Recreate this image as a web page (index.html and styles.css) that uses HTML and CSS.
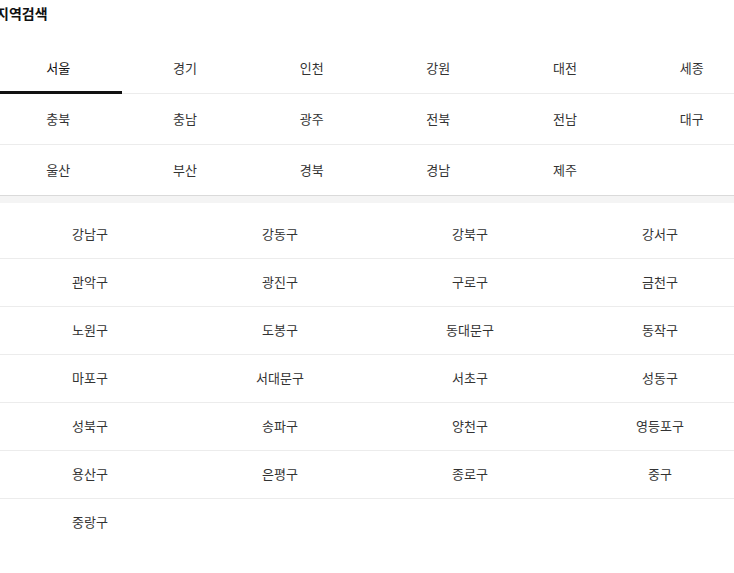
FILE: index.html
```html
<!DOCTYPE html>
<html lang="ko">
<head>
<meta charset="utf-8">
<link rel="stylesheet" href="styles.css">
</head>
<body>
<div class="page">
  <h1 class="title">지역검색</h1>
  <div class="tabs">
    <div class="tab active">서울</div>
    <div class="tab">경기</div>
    <div class="tab">인천</div>
    <div class="tab">강원</div>
    <div class="tab">대전</div>
    <div class="tab">세종</div>
    <div class="tab">충북</div>
    <div class="tab">충남</div>
    <div class="tab">광주</div>
    <div class="tab">전북</div>
    <div class="tab">전남</div>
    <div class="tab">대구</div>
    <div class="tab">울산</div>
    <div class="tab">부산</div>
    <div class="tab">경북</div>
    <div class="tab">경남</div>
    <div class="tab">제주</div>
    <div class="tab"></div>
  </div>
  <div class="band"></div>
  <div class="districts">
    <div class="gu">강남구</div>
    <div class="gu">강동구</div>
    <div class="gu">강북구</div>
    <div class="gu">강서구</div>
    <div class="gu">관악구</div>
    <div class="gu">광진구</div>
    <div class="gu">구로구</div>
    <div class="gu">금천구</div>
    <div class="gu">노원구</div>
    <div class="gu">도봉구</div>
    <div class="gu">동대문구</div>
    <div class="gu">동작구</div>
    <div class="gu">마포구</div>
    <div class="gu">서대문구</div>
    <div class="gu">서초구</div>
    <div class="gu">성동구</div>
    <div class="gu">성북구</div>
    <div class="gu">송파구</div>
    <div class="gu">양천구</div>
    <div class="gu">영등포구</div>
    <div class="gu">용산구</div>
    <div class="gu">은평구</div>
    <div class="gu">종로구</div>
    <div class="gu">중구</div>
    <div class="gu">중랑구</div>
  </div>
</div>
</body>
</html>
```
FILE: styles.css
```css
html, body {
  margin: 0;
  padding: 0;
  background: #fff;
  overflow: hidden;
}
body {
  font-family: "Noto Sans CJK KR", "Noto Sans", sans-serif;
  color: #333;
}
.page {
  width: 760px;
  margin-left: -5px;
}
.title {
  margin: 0 0 17px 0;
  font-size: 14px;
  font-weight: 700;
  line-height: 26px;
  color: #111;
  padding-left: 1px;
}
.tabs {
  display: grid;
  grid-template-columns: repeat(6, 1fr);
  border-bottom: 1px solid #dadada;
}
.tab {
  height: 50px;
  line-height: 49px;
  text-align: center;
  font-size: 13px;
  color: #333;
}
.tab:nth-child(-n+12) {
  border-bottom: 1px solid #ececec;
}
.tab.active {
  color: #111;
  border-bottom-color: #111;
  box-shadow: inset 0 -2px 0 #111;
}
.band {
  height: 7px;
  background: #f4f4f4;
}
.districts {
  display: grid;
  grid-template-columns: repeat(4, 1fr);
  padding-top: 8px;
}
.gu {
  height: 47px;
  line-height: 45px;
  text-align: center;
  font-size: 13px;
  color: #333;
}
.gu:nth-child(-n+24) {
  border-bottom: 1px solid #ececec;
}
```
